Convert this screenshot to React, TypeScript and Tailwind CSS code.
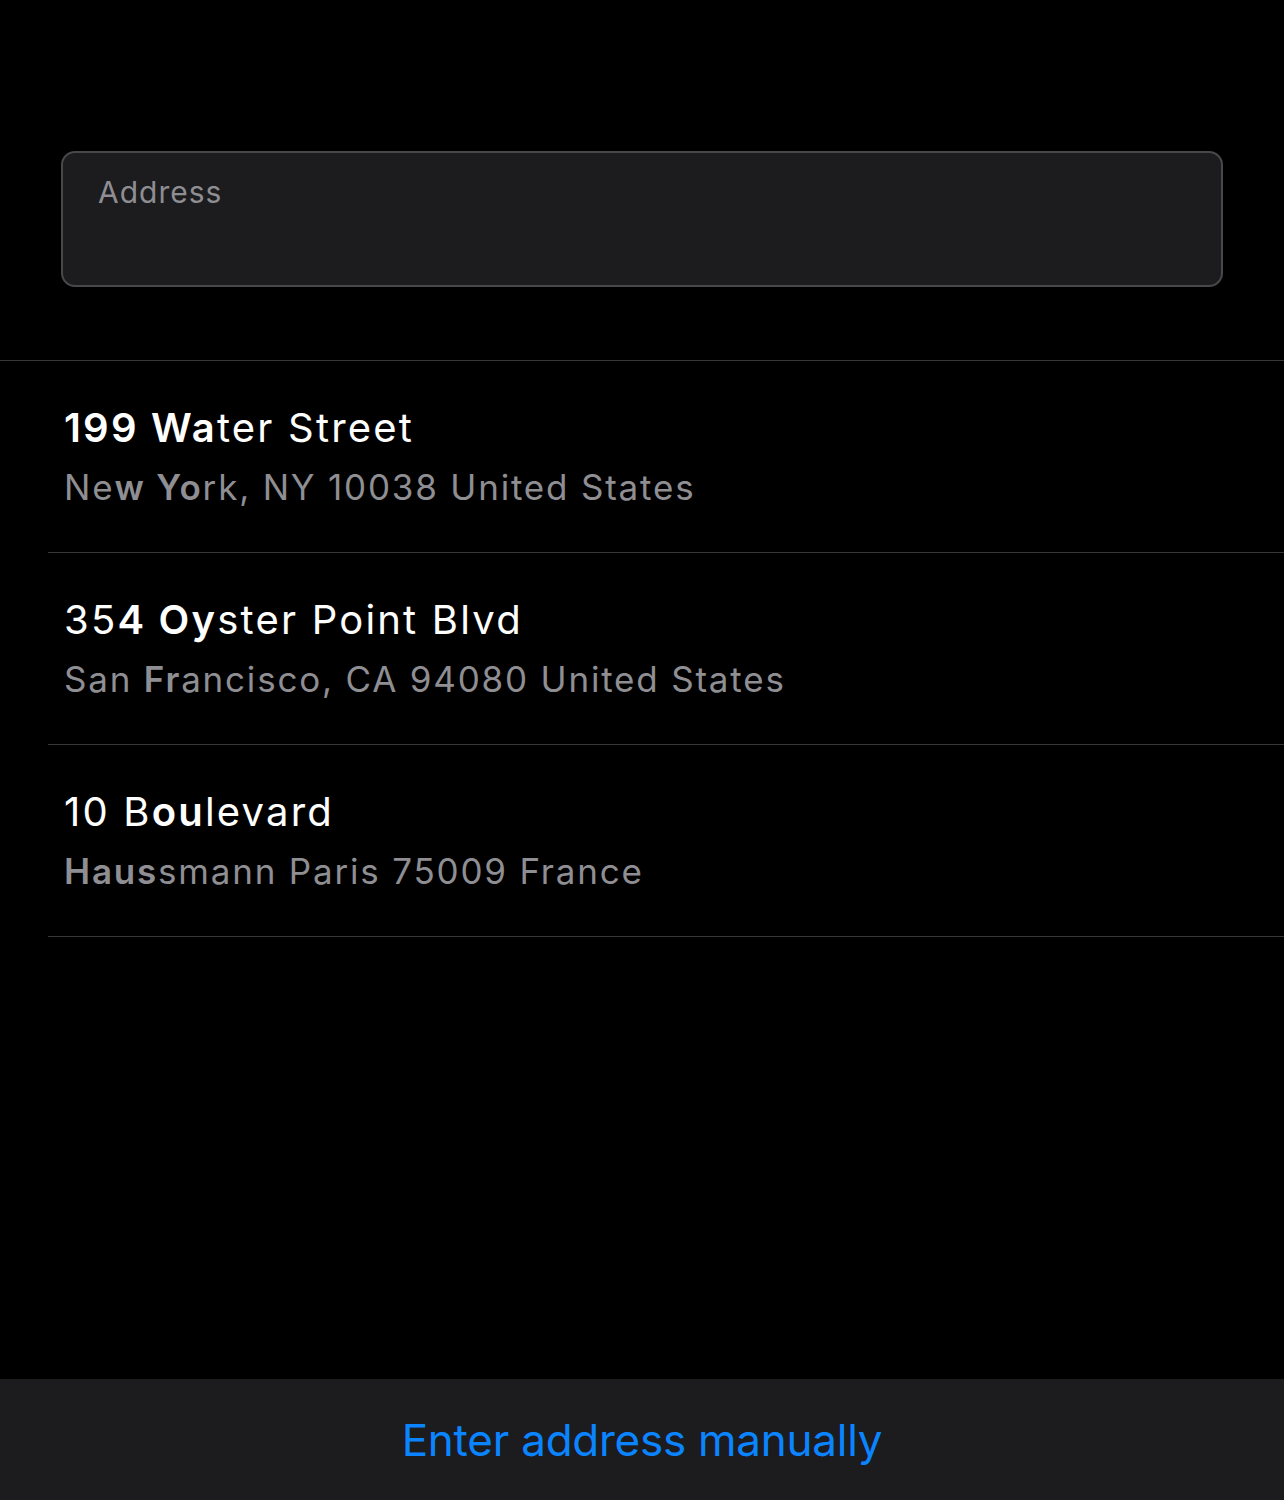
import React from "react";

type Part = { text: string; bold?: boolean };
type Place = { title: Part[]; subtitle: Part[] };

const places: Place[] = [
  {
    title: [{ text: "199 Wa", bold: true }, { text: "ter Street" }],
    subtitle: [{ text: "Ne" }, { text: "w Yo", bold: true }, { text: "rk, NY 10038 United States" }],
  },
  {
    title: [{ text: "35" }, { text: "4 Oy", bold: true }, { text: "ster Point Blvd" }],
    subtitle: [{ text: "San " }, { text: "Fr", bold: true }, { text: "ancisco, CA 94080 United States" }],
  },
  {
    title: [{ text: "10 B" }, { text: "ou", bold: true }, { text: "levard" }],
    subtitle: [{ text: "Haus", bold: true }, { text: "smann Paris 75009 France" }],
  },
];

function Parts({ parts }: { parts: Part[] }) {
  return (
    <>
      {parts.map((p, i) => (
        <span key={i} className={p.bold ? "font-semibold" : "font-normal"}>
          {p.text}
        </span>
      ))}
    </>
  );
}

export default function App() {
  return (
    <div className="flex min-h-[1500px] flex-col bg-black font-['Inter',sans-serif]">
      <div className="px-[61px] pt-[151px]">
        <div className="h-[136px] rounded-[14px] border-2 border-[#48484a] bg-[#1c1c1e] px-[35px] pt-[19px]">
          <span className="text-[30px] leading-[40px] tracking-[1px] text-[#8e8e93]">Address</span>
        </div>
      </div>

      <div className="mt-[73px] border-t border-[#38383a]">
        {places.map((place, i) => (
          <div key={i} className="ml-[48px] flex h-[192px] flex-col justify-center border-b border-[#38383a] pl-[16px]">
            <p className="text-[40px] leading-[60px] tracking-[2.2px] text-white">
              <Parts parts={place.title} />
            </p>
            <p className="text-[35px] leading-[58px] tracking-[1.8px] text-[#8e8e93]">
              <Parts parts={place.subtitle} />
            </p>
          </div>
        ))}
      </div>

      <div className="flex-1" />

      <div className="flex h-[121px] items-center justify-center bg-[#1c1c1e]">
        <button className="text-[44px] leading-[56px] tracking-[-0.25px] text-[#0a84ff]">Enter address manually</button>
      </div>
    </div>
  );
}
